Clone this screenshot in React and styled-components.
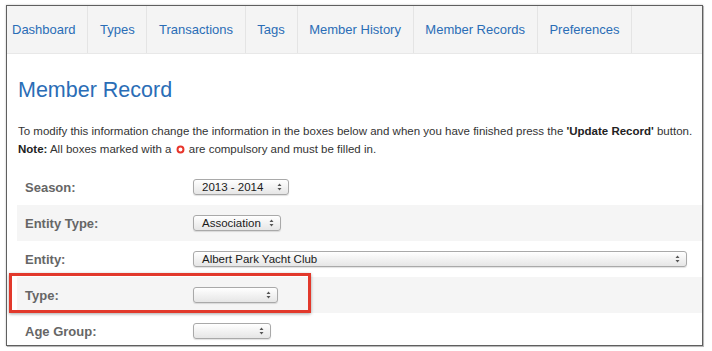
import React from 'react';
import styled, { createGlobalStyle } from 'styled-components';

const GlobalStyle = createGlobalStyle`
  html, body {
    margin: 0;
    padding: 0;
    background: #ffffff;
  }
  body {
    font-family: 'Liberation Sans', Arial, sans-serif;
  }
`;

const Page = styled.div`
  width: 712px;
  height: 351px;
  box-sizing: border-box;
  padding: 5px 9px 5px 6px;
  background: #fff;
`;

const Frame = styled.div`
  height: 100%;
  box-sizing: border-box;
  border: 1px solid #5f5f5f;
  box-shadow: 1px 1px 0 #b8b8b8, 0 0 2px rgba(0, 0, 0, 0.25);
  overflow: hidden;
  position: relative;
  background: #fff;
`;

const Nav = styled.div`
  display: flex;
  height: 47px;
  background: #f4f4f4;
  border-bottom: 1px solid #e8e8e8;
`;

const Tab = styled.a`
  display: flex;
  align-items: center;
  padding: 0 11.7px 1px;
  padding-left: ${(p) => (p.$first ? '5px' : '11.7px')};
  border-right: 1px solid #e4e4e4;
  color: #2a6db6;
  font-size: 13px;
  text-decoration: none;
  white-space: nowrap;
`;

const Body = styled.div`
  padding: 23px 0 0 10px;
`;

const Title = styled.h1`
  margin: 0 0 0 1px;
  font-weight: normal;
  font-size: 21.5px;
  line-height: 26px;
  color: #2a6db6;
`;

const Intro = styled.p`
  margin: 19px 0 11px 1px;
  font-size: 11.5px;
  line-height: 18px;
  color: #333;
  white-space: nowrap;

  b {
    color: #222;
  }
`;

const Required = styled.svg`
  width: 9px;
  height: 9px;
  vertical-align: -1px;
  margin: 0 1px;
`;

const Row = styled.div`
  display: flex;
  align-items: center;
  height: 36px;
  background: ${(p) => (p.$shade ? '#f5f5f5' : '#fff')};
`;

const Label = styled.div`
  width: 176px;
  padding-left: 8px;
  box-sizing: border-box;
  font-size: 13px;
  font-weight: bold;
  color: #666;
`;

const Select = styled.div`
  position: relative;
  display: flex;
  align-items: center;
  box-sizing: border-box;
  width: ${(p) => p.$w}px;
  height: 16px;
  padding: 0 0 0 8px;
  border: 1px solid #a9a9a9;
  border-radius: 3px;
  background: linear-gradient(#ffffff, #f1f1f1 55%, #e6e6e6);
  box-shadow: 0 1px 1px rgba(0, 0, 0, 0.12);
  font-size: 11.5px;
  color: #1a1a1a;
  white-space: nowrap;
`;

const Arrows = styled.svg`
  position: absolute;
  right: 6px;
  top: 3px;
  width: 5px;
  height: 8px;
`;

const Highlight = styled.div`
  position: absolute;
  left: 2px;
  top: 267px;
  width: 302px;
  height: 40px;
  box-sizing: border-box;
  border: 3px solid #e2392c;
  box-shadow: 0 1px 3px rgba(0, 0, 0, 0.35);
  pointer-events: none;
`;

const tabs = [
  'Dashboard',
  'Types',
  'Transactions',
  'Tags',
  'Member History',
  'Member Records',
  'Preferences',
];

const rows = [
  { label: 'Season:', value: '2013 - 2014', w: 96 },
  { label: 'Entity Type:', value: 'Association', w: 88 },
  { label: 'Entity:', value: 'Albert Park Yacht Club', w: 494 },
  { label: 'Type:', value: '', w: 85 },
  { label: 'Age Group:', value: '', w: 78 },
];

function SelectBox({ value, w }) {
  return (
    <Select $w={w}>
      {value}
      <Arrows viewBox="0 0 5 8">
        <path d="M2.5 0.5 L4.5 3 H0.5 Z M2.5 7.5 L4.5 5 H0.5 Z" fill="#555" />
      </Arrows>
    </Select>
  );
}

export default function App() {
  return (
    <>
      <GlobalStyle />
      <Page>
        <Frame>
          <Nav>
            {tabs.map((t, i) => (
              <Tab key={t} $first={i === 0}>
                {t}
              </Tab>
            ))}
          </Nav>
          <Body>
            <Title>Member Record</Title>
            <Intro>
              To modify this information change the information in the boxes below and when you
              have finished press the <b>'Update Record'</b> button.
              <br />
              <b>Note:</b> All boxes marked with a{' '}
              <Required viewBox="0 0 10 10">
                <circle cx="5" cy="5" r="3.3" fill="none" stroke="#e8352b" strokeWidth="2.2" />
              </Required>{' '}
              are compulsory and must be filled in.
            </Intro>
            {rows.map((r, i) => (
              <Row key={r.label} $shade={i % 2 === 1}>
                <Label>{r.label}</Label>
                <SelectBox value={r.value} w={r.w} />
              </Row>
            ))}
          </Body>
          <Highlight />
        </Frame>
      </Page>
    </>
  );
}
